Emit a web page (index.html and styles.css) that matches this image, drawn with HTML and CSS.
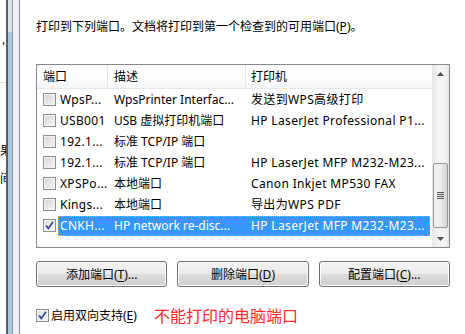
FILE: index.html
```html
<!DOCTYPE html>
<html lang="zh-CN">
<head>
    <meta charset="UTF-8">
    <meta name="viewport" content="width=device-width, initial-scale=1.0">
    <title>端口</title>
    <link rel="stylesheet" href="styles.css">
</head>
<body>
    <div class="window">
        <div class="behind">
            <div class="behind-text">
                <span class="tick">'</span>
                <span class="rule"></span>
                <span class="cut cut-1">果</span>
                <span class="cut cut-2">间</span>
            </div>
            <div class="behind-line"></div>
            <div class="behind-scroll"></div>
            <div class="behind-frame"></div>
        </div>

        <div class="page">
            <p class="intro">打印到下列端口。文档将打印到第一个检查到的可用端口(<u>P</u>)。</p>

            <div class="listbox">
                <div class="list">
                    <div class="list-head">
                        <div class="col">端口</div>
                        <div class="col">描述</div>
                        <div class="col">打印机</div>
                    </div>
                    <div class="row">
                        <span class="check"></span>
                        <div class="cells"><span>WpsP...</span><span>WpsPrinter Interfac...</span><span>发送到WPS高级打印</span></div>
                    </div>
                    <div class="row">
                        <span class="check"></span>
                        <div class="cells"><span>USB001</span><span>USB 虚拟打印机端口</span><span>HP LaserJet Professional P1...</span></div>
                    </div>
                    <div class="row">
                        <span class="check"></span>
                        <div class="cells"><span>192.1...</span><span>标准 TCP/IP 端口</span><span></span></div>
                    </div>
                    <div class="row">
                        <span class="check"></span>
                        <div class="cells"><span>192.1...</span><span>标准 TCP/IP 端口</span><span>HP LaserJet MFP M232-M23...</span></div>
                    </div>
                    <div class="row">
                        <span class="check"></span>
                        <div class="cells"><span>XPSPo...</span><span>本地端口</span><span>Canon Inkjet MP530 FAX</span></div>
                    </div>
                    <div class="row">
                        <span class="check"></span>
                        <div class="cells"><span>Kings...</span><span>本地端口</span><span>导出为WPS PDF</span></div>
                    </div>
                    <div class="row selected">
                        <span class="check checked">
                            <svg width="11" height="11" viewBox="0 0 11 11"><path d="M2 5.5 L4.3 8.5 L9 1.8" fill="none" stroke="#3b4f8f" stroke-width="1.8"/></svg>
                        </span>
                        <div class="cells"><span>CNKH...</span><span>HP network re-disc...</span><span>HP LaserJet MFP M232-M23...</span></div>
                    </div>
                </div>
                <div class="vscroll">
                    <div class="arrow">
                        <svg width="7" height="4" viewBox="0 0 7 4"><path d="M0 4 L3.5 0 L7 4 Z" fill="#4d4d4d"/></svg>
                    </div>
                    <div class="track">
                        <div class="thumb">
                            <span class="grip"></span>
                        </div>
                    </div>
                    <div class="arrow">
                        <svg width="7" height="4" viewBox="0 0 7 4"><path d="M0 0 L7 0 L3.5 4 Z" fill="#4d4d4d"/></svg>
                    </div>
                </div>
            </div>

            <div class="buttons">
                <button>添加端口(<u>T</u>)...</button>
                <button>删除端口(<u>D</u>)</button>
                <button>配置端口(<u>C</u>)...</button>
            </div>

            <div class="bidi">
                <span class="check checked">
                    <svg width="11" height="11" viewBox="0 0 11 11"><path d="M2 5.5 L4.3 8.5 L9 1.8" fill="none" stroke="#3b4f8f" stroke-width="1.8"/></svg>
                </span>
                <span class="bidi-label">启用双向支持(<u>E</u>)</span>
                <span class="note">不能打印的电脑端口</span>
            </div>
        </div>
    </div>
</body>
</html>
```

FILE: styles.css
```css
body {
    margin: 0;
    font-family: "Noto Sans", "Noto Sans CJK SC", sans-serif;
    font-size: 12px;
    color: #000;
    background: #fff;
}
.window {
    display: flex;
    width: 465px;
    height: 334px;
    overflow: hidden;
}

/* window behind the dialog, left edge */
.behind {
    display: flex;
    flex: none;
    width: 20px;
}
.behind-text {
    width: 6px;
    overflow: hidden;
    display: flex;
    flex-direction: column;
    align-items: flex-end;
    font-family: "Noto Sans CJK SC", sans-serif;
}
.tick {
    margin-top: 40px;
    height: 14px;
    line-height: 14px;
    font-size: 11px;
    margin-right: 1px;
}
.rule {
    align-self: stretch;
    height: 1px;
    margin-top: 28px;
    background: #dcdcdc;
}
.cut {
    line-height: 16px;
    margin-right: -6px;
}
.cut-1 {
    margin-top: 59px;
}
.cut-2 {
    margin-top: 12px;
}
.behind-line {
    width: 2px;
    background: #5a5d63;
}
.behind-scroll {
    width: 4px;
    background: linear-gradient(#dde3ea 0, #dde3ea 32px, #a9c5e4 32px);
    border-right: 1px solid #8f959d;
}
.behind-frame {
    flex: 1;
    background: #eef0f3;
    border-right: 1px solid #8a8f97;
}

/* tab page */
.page {
    flex: 1;
    padding: 19px 15px 0 16px;
}
.intro {
    margin: 0;
    line-height: 16px;
}
u {
    text-decoration-thickness: 1px;
    text-underline-offset: 2px;
}

.listbox {
    display: flex;
    box-sizing: border-box;
    height: 184px;
    margin-top: 29px;
    border: 1px solid #828790;
}
.list {
    flex: 1;
}
.list-head {
    display: grid;
    grid-template-columns: 71px 138px 1fr;
    height: 23px;
    background: linear-gradient(#ffffff, #ffffff 50%, #f4f5f7);
    border-bottom: 1px solid #e5e8ec;
}
.col {
    line-height: 23px;
    padding-left: 6px;
    border-right: 1px solid #e3e6ea;
}
.col:last-child {
    padding-left: 5px;
    border-right: none;
}
.row {
    display: flex;
    align-items: center;
    height: 21px;
}
.row .check {
    margin-left: 6px;
}
.cells {
    flex: 1;
    display: grid;
    grid-template-columns: 50px 137px 1fr;
    height: 20px;
    line-height: 20px;
    margin: 0 2px 0 2px;
    white-space: nowrap;
}
.cells span {
    padding-left: 6px;
}
.cells span:first-child {
    padding-left: 2px;
    letter-spacing: 0.3px;
}
.cells span:last-child {
    letter-spacing: 0.35px;
}
.selected .cells {
    background: #3399ff;
    color: #fff;
    outline: 1px dotted #f0a050;
    outline-offset: -1px;
}

.check {
    display: inline-flex;
    align-items: center;
    justify-content: center;
    flex: none;
    box-sizing: border-box;
    width: 13px;
    height: 13px;
    border: 1px solid #8e8f8f;
    background: linear-gradient(135deg, #d4d4d4, #f6f6f6);
    box-shadow: inset 0 0 0 1px #f4f4f4;
}
.check.checked {
    background: linear-gradient(135deg, #dcdcdc, #fafafa);
}

/* vertical scrollbar */
.vscroll {
    display: flex;
    flex-direction: column;
    width: 17px;
    background: linear-gradient(90deg, #e6e6e6, #f4f4f4 40%, #f4f4f4 70%, #e8e8e8);
}
.arrow {
    display: flex;
    align-items: center;
    justify-content: center;
    height: 17px;
}
.track {
    flex: 1;
}
.thumb {
    display: flex;
    align-items: center;
    justify-content: center;
    box-sizing: border-box;
    height: 65px;
    margin: 81px 1px 0 1px;
    border: 1px solid #979797;
    border-radius: 2px;
    background: linear-gradient(90deg, #f2f2f2, #ebebeb 50%, #d6d6d6);
}
.grip {
    width: 7px;
    height: 7px;
    background: repeating-linear-gradient(#555 0, #555 1px, transparent 1px, transparent 2px);
}

.buttons {
    display: flex;
    gap: 10px;
    margin-top: 13px;
}
button {
    flex: 1;
    height: 26px;
    padding: 0;
    font: inherit;
    color: #000;
    border: 1px solid #707070;
    border-radius: 3px;
    background: linear-gradient(#f2f2f2, #ebebeb 50%, #dddddd 50%, #cfcfcf);
    box-shadow: inset 0 0 0 1px #fcfcfc;
}

.bidi {
    display: flex;
    align-items: center;
    margin-top: 18px;
    height: 20px;
}
.bidi-label {
    margin-left: 2px;
}
.note {
    margin-left: 17px;
    font-size: 16px;
    color: #ff2b2b;
}
```
